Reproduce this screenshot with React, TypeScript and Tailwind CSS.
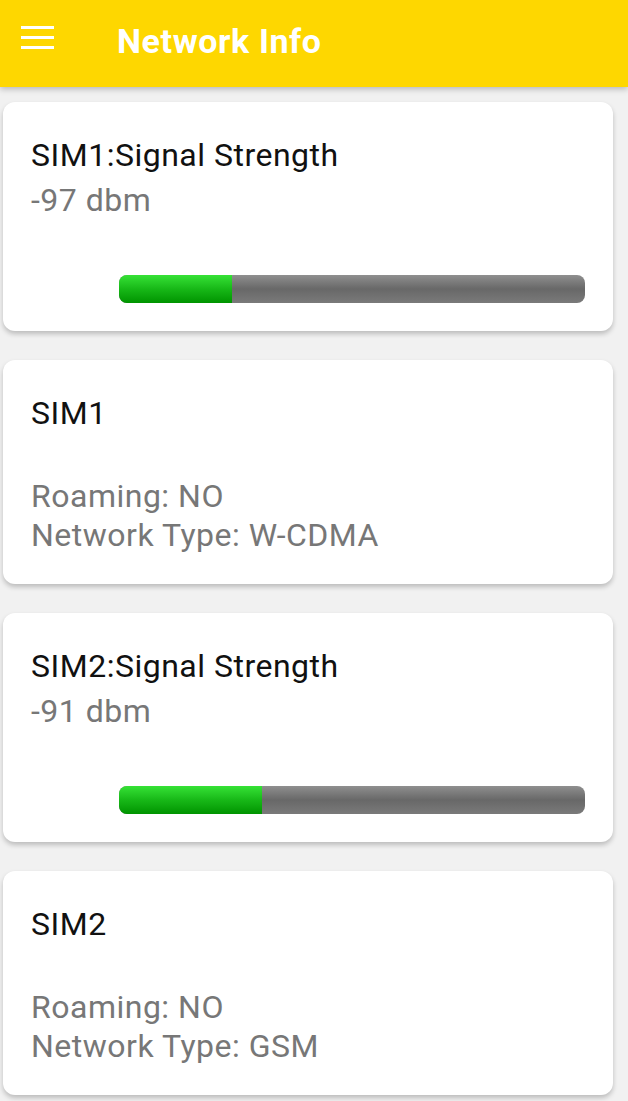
import React from "react";

type SignalProps = {
  sim: string;
  dbm: number;
  fill: string;
};

type InfoProps = {
  sim: string;
  roaming: string;
  networkType: string;
};

const SignalCard = (props: SignalProps) => {
  return (
    <div className="mx-[3px] w-[610px] rounded-[12px] bg-white pt-[34px] pb-[28px] pl-[28px] shadow-[0_3px_5px_rgba(0,0,0,0.22)]">
      <p className="text-[32px] leading-[38px] tracking-[0.5px] text-[#111]">{props.sim}:Signal Strength</p>
      <p className="mt-[7px] text-[32px] leading-[38px] tracking-[0.5px] text-[#777]">{props.dbm} dbm</p>
      <div className="mt-[56px] ml-[88px] flex h-[28px] w-[466px] overflow-hidden rounded-[8px] bg-gradient-to-b from-[#8f8f8f] via-[#686868] to-[#7a7a7a]">
        <div className={`h-full bg-gradient-to-b from-[#35e235] via-[#17b817] to-[#009400] ${props.fill}`}></div>
      </div>
    </div>
  );
};

const InfoCard = (props: InfoProps) => {
  return (
    <div className="mx-[3px] w-[610px] rounded-[12px] bg-white pt-[34px] pb-[29px] pl-[28px] shadow-[0_3px_5px_rgba(0,0,0,0.22)]">
      <p className="text-[32px] leading-[38px] tracking-[0.5px] text-[#111]">{props.sim}</p>
      <div className="mt-[45px] text-[32px] leading-[39px] tracking-[0.5px] text-[#777]">
        <p>Roaming: {props.roaming}</p>
        <p>Network Type: {props.networkType}</p>
      </div>
    </div>
  );
};

const App = () => {
  return (
    <div className="min-h-[1101px] w-[628px] bg-[#f1f1f1] font-['Roboto',sans-serif]">
      <div className="relative z-10 flex h-[87px] items-center bg-[#fed700] shadow-[0_2px_6px_rgba(0,0,0,0.25)]">
        <div className="mb-[12px] ml-[21px] flex w-[33px] flex-col gap-[7px]">
          <span className="block h-[3px] bg-white"></span>
          <span className="block h-[3px] bg-white"></span>
          <span className="block h-[3px] bg-white"></span>
        </div>
        <h1 className="mb-[5px] ml-[63px] text-[34px] font-bold tracking-[0.6px] text-white">Network Info</h1>
      </div>
      <div className="flex flex-col gap-[29px] pt-[15px]">
        <SignalCard sim="SIM1" dbm={-97} fill="w-[113px]" />
        <InfoCard sim="SIM1" roaming="NO" networkType="W-CDMA" />
        <SignalCard sim="SIM2" dbm={-91} fill="w-[143px]" />
        <InfoCard sim="SIM2" roaming="NO" networkType="GSM" />
      </div>
    </div>
  );
};

export default App;
